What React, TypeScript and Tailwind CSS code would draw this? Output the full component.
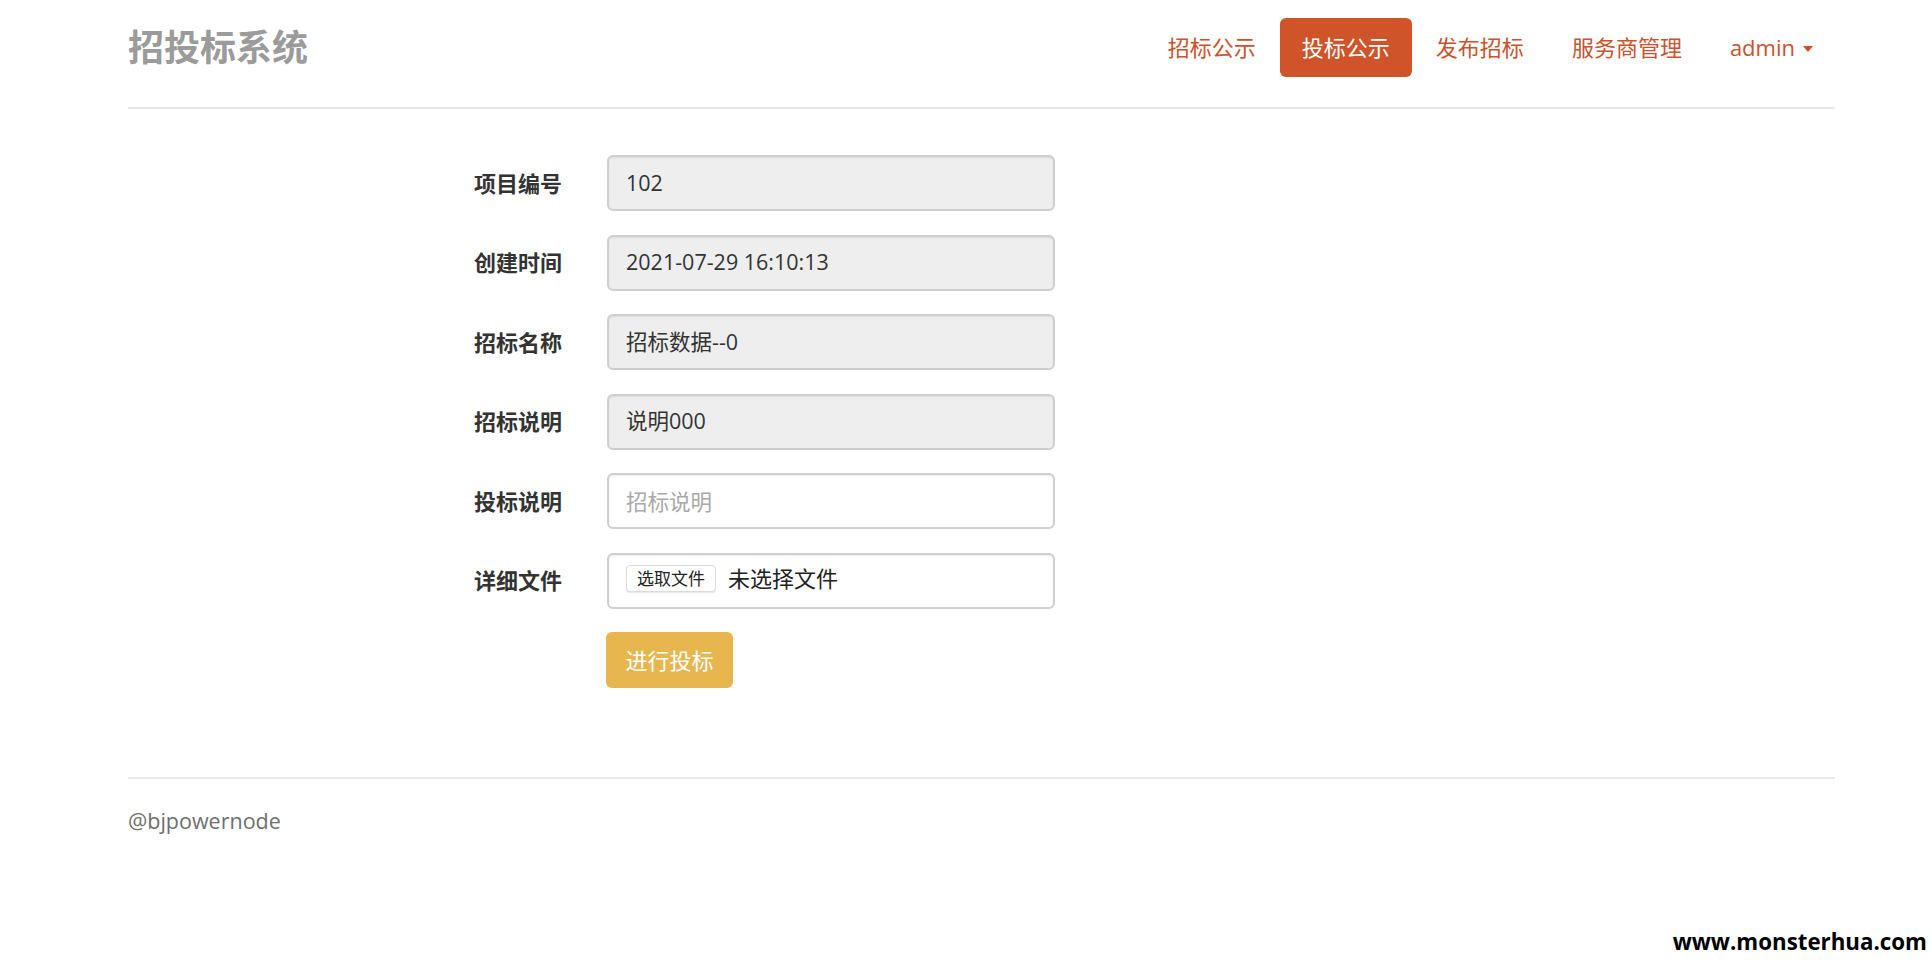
const font = "font-['Open_Sans','Noto_Sans_CJK_SC',sans-serif]";

const navItems = ["招标公示", "投标公示", "发布招标", "服务商管理"];

function Header() {
  return (
    <div>
      <div className="flex items-center justify-between pt-[18px] pb-[30px]">
        <h3 className="text-[36px] leading-none font-semibold text-[#9b9b9b]">招投标系统</h3>
        <nav className="flex items-center text-[22px]">
          {navItems.map((item) =>
            item === "投标公示" ? (
              <a key={item} className="h-[59px] px-[22px] flex items-center rounded-[6px] bg-[#cf5429] text-white">
                {item}
              </a>
            ) : (
              <a key={item} className="h-[59px] px-[24px] flex items-center text-[#cc522b]">
                {item}
              </a>
            ),
          )}
          <a className="h-[59px] pl-[24px] pr-[22px] flex items-center gap-[8px] text-[#cc522b]">
            admin
            <span className="w-0 h-0 border-l-[5px] border-r-[5px] border-t-[6px] border-l-transparent border-r-transparent border-t-[#cc522b] mt-[2px]" />
          </a>
        </nav>
      </div>
      <div className="border-t-2 border-[#e9e9e9]" />
    </div>
  );
}

function Row({ label, children }: { label: string; children: React.ReactNode }) {
  return (
    <div className="flex items-center">
      <label className="w-[479px] pr-[45px] text-right text-[22px] font-bold text-[#333]">{label}</label>
      {children}
    </div>
  );
}

function ReadOnly({ value }: { value: string }) {
  return (
    <div className="w-[448px] h-[56px] px-[17px] flex items-center rounded-[6px] border-2 border-[#cfcfcf] bg-[#eeeeee] shadow-[inset_0_1px_2px_rgba(0,0,0,0.08)] text-[21.5px] text-[#333]">
      {value}
    </div>
  );
}

function BidForm() {
  return (
    <div className="flex flex-col gap-[23.5px] pt-[46px]">
      <Row label="项目编号">
        <ReadOnly value="102" />
      </Row>
      <Row label="创建时间">
        <ReadOnly value="2021-07-29 16:10:13" />
      </Row>
      <Row label="招标名称">
        <ReadOnly value="招标数据--0" />
      </Row>
      <Row label="招标说明">
        <ReadOnly value="说明000" />
      </Row>
      <Row label="投标说明">
        <input
          placeholder="招标说明"
          className="w-[448px] h-[56px] px-[17px] rounded-[6px] border-2 border-[#cfcfcf] bg-white shadow-[inset_0_1px_2px_rgba(0,0,0,0.08)] text-[21.5px] text-[#333] placeholder:text-[#a8a8a8] outline-none"
        />
      </Row>
      <Row label="详细文件">
        <div className="w-[448px] h-[56px] px-[17px] pb-[4px] flex items-center gap-[12px] rounded-[6px] border-2 border-[#cfcfcf] bg-white shadow-[inset_0_1px_2px_rgba(0,0,0,0.08)]">
          <span className="h-[27px] px-[10px] flex items-center rounded-[4px] border border-[#dcdcdc] bg-white text-[17px] text-[#222] shadow-[0_1px_1px_rgba(0,0,0,0.1)]">
            选取文件
          </span>
          <span className="text-[22px] text-[#222]">未选择文件</span>
        </div>
      </Row>
      <div className="flex">
        <div className="w-[478px]" />
        <button className="w-[127px] h-[56px] rounded-[6px] bg-[#e7b64f] text-white text-[22px]">进行投标</button>
      </div>
    </div>
  );
}

export default function App() {
  return (
    <div className={`relative w-[1932px] h-[972px] bg-white ${font}`}>
      <div className="ml-[128px] w-[1707px]">
        <Header />
        <BidForm />
        <div className="mt-[89px] border-t-2 border-[#e9e9e9]" />
        <p className="pt-[27px] text-[21.5px] leading-[30px] text-[#6f6f6f]">@bjpowernode</p>
      </div>
      <span className="absolute right-[5px] top-[925px] text-[22.3px] font-bold text-black font-['Open_Sans',sans-serif]">
        www.monsterhua.com
      </span>
    </div>
  );
}
